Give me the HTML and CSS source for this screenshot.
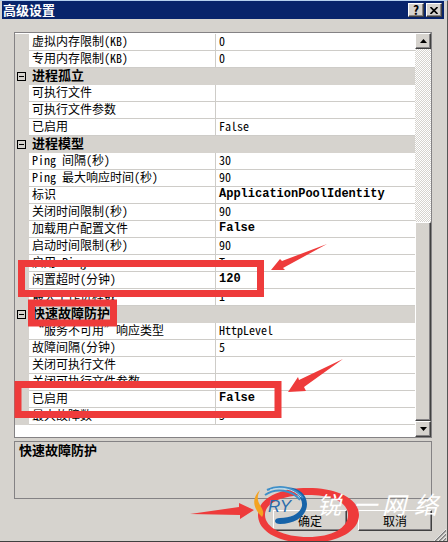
FILE: index.html
```html
<!DOCTYPE html>
<html lang="zh-CN">
<head>
  <meta charset="UTF-8" />
  <meta name="viewport" content="width=device-width, initial-scale=1.0"/>
  <title>高级设置</title>
  <link rel="stylesheet" href="styles.css">
</head>
<body>
  <div class="dialog">
    <header class="title-bar">
      <h1>高级设置</h1>
      <button class="title-button" aria-label="帮助">?</button>
      <button class="title-button" aria-label="关闭">
        <svg width="8" height="7" viewBox="0 0 8 7"><path d="M0.5 0L7.5 7M7.5 0L0.5 7" stroke="#000" stroke-width="1.6"/></svg>
      </button>
    </header>

    <main class="content">
      <div class="grid-box">
        <div class="grid-view">
          <table class="properties">
            <colgroup><col class="col-gutter"><col class="col-name"><col></colgroup>
            <tbody>
              <tr><td></td><th>虚拟内存限制(KB)</th><td>0</td></tr>
              <tr><td></td><th>专用内存限制(KB)</th><td>0</td></tr>
              <tr class="category"><td><button class="toggle" aria-label="折叠进程孤立"></button></td><th colspan="2">进程孤立</th></tr>
              <tr><td></td><th>可执行文件</th><td></td></tr>
              <tr><td></td><th>可执行文件参数</th><td></td></tr>
              <tr><td></td><th>已启用</th><td>False</td></tr>
              <tr class="category"><td><button class="toggle" aria-label="折叠进程模型"></button></td><th colspan="2">进程模型</th></tr>
              <tr><td></td><th>Ping 间隔(秒)</th><td>30</td></tr>
              <tr><td></td><th>Ping 最大响应时间(秒)</th><td>90</td></tr>
              <tr><td></td><th>标识</th><td class="changed">ApplicationPoolIdentity</td></tr>
              <tr><td></td><th>关闭时间限制(秒)</th><td>90</td></tr>
              <tr><td></td><th>加载用户配置文件</th><td class="changed">False</td></tr>
              <tr><td></td><th>启动时间限制(秒)</th><td>90</td></tr>
              <tr><td></td><th>启用 Ping</th><td>True</td></tr>
              <tr><td></td><th>闲置超时(分钟)</th><td class="changed">120</td></tr>
              <tr><td></td><th>最大工作进程数</th><td>1</td></tr>
              <tr class="category"><td><button class="toggle" aria-label="折叠快速故障防护"></button></td><th colspan="2">快速故障防护</th></tr>
              <tr><td></td><th><span class="quote">“</span>服务不可用<span class="quote close">”</span>响应类型</th><td>HttpLevel</td></tr>
              <tr><td></td><th>故障间隔(分钟)</th><td>5</td></tr>
              <tr><td></td><th>关闭可执行文件</th><td></td></tr>
              <tr><td></td><th>关闭可执行文件参数</th><td></td></tr>
              <tr><td></td><th>已启用</th><td class="changed">False</td></tr>
              <tr><td></td><th>最大故障数</th><td>5</td></tr>
            </tbody>
          </table>
        </div>
        <div class="scrollbar">
          <button class="scroll-button" aria-label="向上滚动">
            <svg width="7" height="4" viewBox="0 0 7 4"><path d="M3.5 0L7 4H0z"/></svg>
          </button>
          <div class="scroll-track"></div>
          <div class="scroll-thumb"></div>
          <button class="scroll-button" aria-label="向下滚动">
            <svg width="7" height="4" viewBox="0 0 7 4"><path d="M0 0H7L3.5 4z"/></svg>
          </button>
        </div>
      </div>

      <section class="description">
        <h2>快速故障防护</h2>
      </section>
    </main>

    <footer class="actions">
      <button class="action">确定</button>
      <button class="action">取消</button>
      <svg class="grip" width="12" height="12" viewBox="0 0 12 12">
        <path d="M1 12L12 1M5 12L12 5M9 12L12 9" stroke="#808080" stroke-width="1.6"/>
        <path d="M0 12L12 0M4 12L12 4M8 12L12 8" stroke="#fff" stroke-width="0.7"/>
      </svg>
    </footer>

    <!-- highlights and arrows over the dialog -->
    <svg class="annotations" width="448" height="542" viewBox="0 0 448 542">
      <g fill="none" stroke="#ee3b3b" stroke-width="7">
        <rect x="21.5" y="263.5" width="239" height="30"/>
        <rect x="31.5" y="303" width="82" height="20"/>
        <rect x="18" y="384.5" width="260" height="30"/>
      </g>
      <g fill="#ee3b3b">
        <path d="M271 270L280 259L282 261L327 244L283 268L285 270z"/>
        <path d="M288 392L298 377L299 380L343 359L304 387L306 391z"/>
        <path d="M190 514L239 507V503L254 510L240 519V515z"/>
        <path fill-rule="evenodd" d="M258 515C258 498 280 488 308 488S359 498 359 515S336 543 308 543S258 532 258 515zM265 515C265 528 284 537 308 537S348 528 348 515S332 495 308 495S265 502 265 515z"/>
      </g>
      <g class="watermark">
        <path d="M260 490C252 498 252 507 262 517C265 512 262 509 260 505C257 500 257 496 260 490z" fill="#f4a322"/>
        <path d="M282 488C297 485 307 494 307 504C307 516 295 524 280 524C277 524 275 523 275 521C275 519 277 518 280 518C291 518 300 514 302 506C303 497 295 490 282 488z" fill="#1763a8"/>
        <path d="M265 495C276 487 292 490 300 500M267 490C279 484 295 487 303 498" fill="none" stroke="#3f8fc8" stroke-width="2"/>
        <path d="M270 490C282 486 293 489 301 497" fill="none" stroke="#b9dcf0" stroke-width="1"/>
        <text class="mark-initials" x="268" y="512">RY</text>
        <text class="mark-name" y="514"><tspan x="317">锐</tspan><tspan x="353">一</tspan><tspan x="382">网</tspan><tspan x="414">络</tspan></text>
      </g>
    </svg>
  </div>
</body>
</html>
```
FILE: styles.css
```css
* {
  box-sizing: border-box;
}

body {
  margin: 0;
  background: #d6d3ce;
  color: #000;
  font-family: "Noto Sans CJK SC", sans-serif;
  font-size: 12px;
  font-feature-settings: "hwid" 1;
}

button {
  display: flex;
  align-items: center;
  justify-content: center;
  padding: 0;
  font: inherit;
  color: #000;
  background: #d6d3ce;
  border: 1px solid;
  border-color: #fff #404040 #404040 #fff;
  box-shadow: inset -1px -1px 0 #848284;
  border-radius: 0;
}

.dialog {
  position: relative;
  display: flex;
  flex-direction: column;
  min-height: 100vh;
  overflow: hidden;
  padding: 0 2px 0 1px;
  border-top: 1px solid #b5d0ee;
  border-right: 1px solid #555;
  border-bottom: 1px solid #404040;
}

.title-bar {
  display: flex;
  align-items: center;
  gap: 2px;
  height: 18px;
  margin: 0 1px;
  padding: 0 2px 0 1px;
  background: #08246b;
}

.title-bar h1 {
  flex: 1;
  margin: 0;
  color: #fff;
  font-size: 13px;
  line-height: 18px;
}

.title-button {
  width: 16px;
  height: 14px;
  font-size: 13px;
  font-weight: bold;
  line-height: 12px;
}

.content {
  flex: 1;
  display: flex;
  flex-direction: column;
  gap: 3px;
  padding: 13px 13px 0;
}

.grid-box {
  flex: 1;
  display: flex;
  background: #fff;
  border: 1px solid #848284;
}

.grid-view {
  flex: 1;
  padding-top: 1px;
}

.properties {
  width: 100%;
  table-layout: fixed;
  border-spacing: 0;
}

.col-gutter {
  width: 14px;
}

.col-name {
  width: 187px;
}

.properties td,
.properties th {
  height: 17px;
  padding: 0 3px 2px;
  border-bottom: 1px solid #ceccc8;
  font-weight: normal;
  line-height: 14px;
  text-align: left;
  white-space: nowrap;
}

.properties th {
  border-right: 1px solid #ceccc8;
}

.properties td:first-child,
.properties .category th {
  padding-right: 0;
  background: #d6d3ce;
  border-color: #d6d3ce;
}

.properties td:first-child {
  padding-bottom: 0;
  padding-left: 2px;
}

.properties .category th {
  font-size: 13px;
  font-weight: bold;
}

.properties .changed {
  font-family: "Liberation Mono", monospace;
  font-weight: bold;
}

.quote {
  display: inline-block;
  width: 12px;
  text-align: right;
}

.quote.close {
  text-align: left;
}

.toggle {
  width: 9px;
  height: 9px;
  border-color: #000;
  box-shadow: none;
}

.toggle::before {
  content: "";
  width: 5px;
  height: 1px;
  background: #000;
}

.scrollbar {
  display: flex;
  flex-direction: column;
  width: 16px;
  background: repeating-conic-gradient(#d6d3ce 0 25%, #fff 0 50%) 0 0 / 2px 2px;
}

.scroll-button {
  width: 16px;
  height: 16px;
}

.scroll-track {
  flex: 7;
}

.scroll-thumb {
  flex: 8;
  background: #d6d3ce;
  border: 1px solid;
  border-color: #fff #404040 #404040 #fff;
  box-shadow: inset -1px -1px 0 #848284;
}

.description {
  height: 58px;
  padding: 0 4px;
  border: 1px solid #848284;
}

.description h2 {
  margin: 0;
  font-size: 13px;
  line-height: 16px;
}

.actions {
  display: flex;
  justify-content: flex-end;
  gap: 11px;
  padding: 11px 13px 10px;
}

.action {
  width: 74px;
  height: 21px;
}

.grip {
  position: absolute;
  right: 1px;
  bottom: 0;
}

.annotations {
  position: absolute;
  top: -1px;
  left: 0;
  pointer-events: none;
}

.mark-initials {
  fill: #2a6cab;
  font-family: "Liberation Sans", sans-serif;
  font-size: 17px;
  font-style: italic;
}

.mark-name {
  fill: #fff;
  font-size: 24px;
  font-style: italic;
}
```
